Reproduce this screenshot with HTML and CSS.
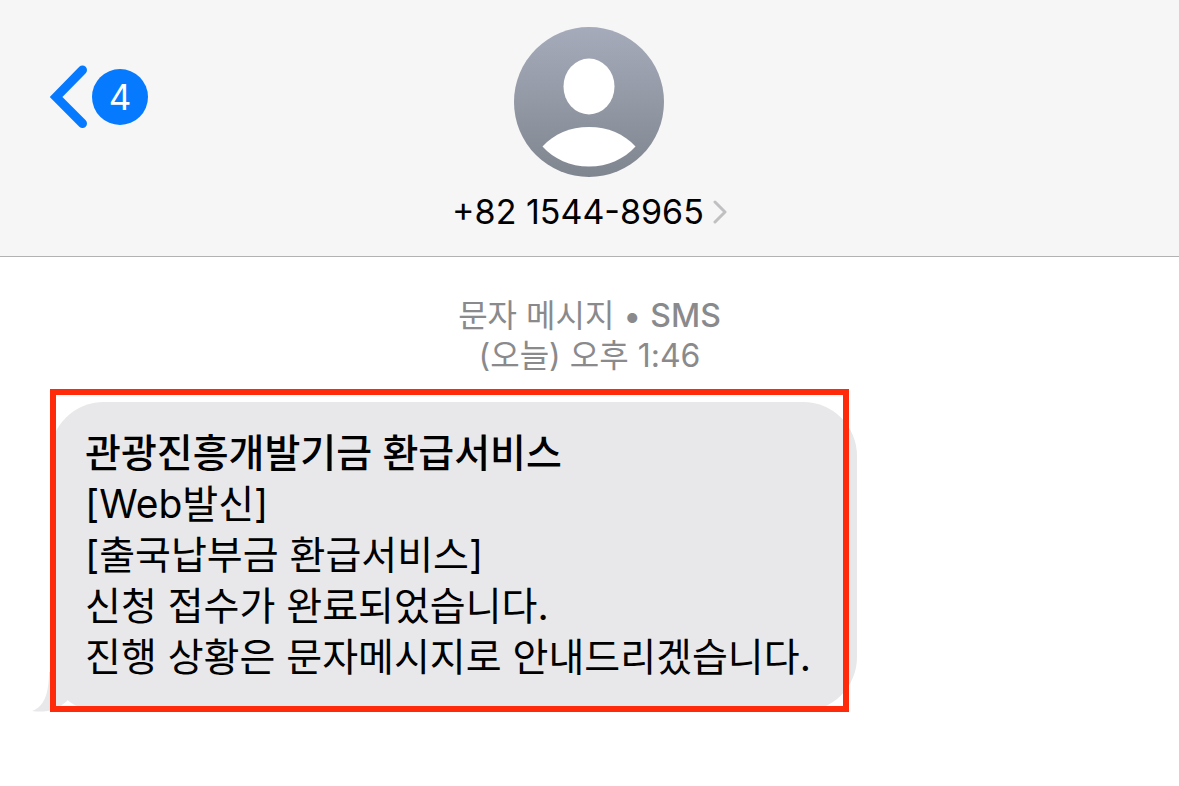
FILE: index.html
```html
<!DOCTYPE html>
<html lang="ko">

<head>
	<title>+82 1544-8965</title>
	<meta charset="UTF-8" />
	<meta name="viewport" content="width=device-width, initial-scale=1" />
	<link rel="stylesheet" href="styles.css">
</head>

<body>

<header class="header">
	<a class="back" href="#" aria-label="뒤로">
		<svg class="back-arrow" viewBox="0 0 38 64" aria-hidden="true">
			<path d="M32.500 5 L6 32 L32.500 58.500" />
		</svg>
		<span class="badge">4</span>
	</a>

	<a class="contact" href="#">
		<svg class="avatar" viewBox="0 0 150 150" aria-hidden="true">
			<defs>
				<linearGradient id="avatarFill" x1="0" y1="0" x2="0" y2="1">
					<stop offset="0" stop-color="#a5abba" />
					<stop offset="1" stop-color="#80868f" />
				</linearGradient>
			</defs>
			<circle cx="75" cy="75" r="75" fill="url(#avatarFill)" />
			<ellipse cx="75" cy="59.500" rx="25.500" ry="28" fill="#fff" />
			<path d="M28.500 119.500 C40 107 56 100 75 100 C94 100 110 107 121.500 119.500 C110 132 94 139.500 75 139.500 C56 139.500 40 132 28.500 119.500 Z" fill="#fff" />
		</svg>
		<span class="number">
			+82 1544-8965
			<svg class="chevron" viewBox="0 0 14 24" aria-hidden="true">
				<path d="M2 2 L12 12 L2 22" />
			</svg>
		</span>
	</a>
</header>

<main class="thread">
	<p class="stamp">
		문자 메시지 • <span class="stamp-kind">SMS</span><br />
		(오늘) 오후 1:46
	</p>

	<div class="message">
		<div class="bubble">
			<strong class="title">관광진흥개발기금 환급서비스</strong><br />
			[Web발신]<br />
			[출국납부금 환급서비스]<br />
			신청 접수가 완료되었습니다.<br />
			진행 상황은 문자메시지로 안내드리겠습니다.
		</div>
		<svg class="tail" viewBox="0 0 40 40" aria-hidden="true">
			<path d="M17 0 C17 22 12 35 0 39 C14 41 25 38 35 29 L40 20 L40 0 Z" />
		</svg>
		<div class="highlight"></div>
	</div>
</main>

</body>

</html>
```

FILE: styles.css
```css
* {
  box-sizing: border-box;
}

body {
  margin: 0;
  background: #fff;
  color: #000;
  font-family: Inter, "Noto Sans CJK KR", sans-serif;
}

a {
  color: inherit;
  text-decoration: none;
}

.header {
  display: grid;
  grid-template-columns: 1fr auto 1fr;
  align-items: start;
  padding: 27px 50px 24px;
  background: #f6f6f6;
  border-bottom: 1px solid #b2b2b2;
}

.back {
  display: flex;
  align-items: center;
  gap: 4px;
  width: fit-content;
  margin-top: 38px;
}

.back-arrow {
  width: 38px;
  height: 64px;
  fill: none;
  stroke: #067aff;
  stroke-width: 9;
  stroke-linecap: round;
  stroke-linejoin: miter;
}

.badge {
  width: 56px;
  height: 56px;
  border-radius: 50%;
  background: #067aff;
  color: #fff;
  font-size: 35px;
  line-height: 56px;
  text-align: center;
}

.contact {
  display: flex;
  flex-direction: column;
  align-items: center;
  gap: 15px;
}

.avatar {
  width: 150px;
  height: 150px;
}

.number {
  display: flex;
  align-items: center;
  gap: 9px;
  font-size: 34px;
  line-height: 40px;
}

.chevron {
  width: 14px;
  height: 24px;
  fill: none;
  stroke: #c0c0c2;
  stroke-width: 3;
  stroke-linecap: round;
  stroke-linejoin: round;
}

.thread {
  padding: 39px 50px;
}

.stamp {
  margin: 0 0 26px;
  color: #8a8a8d;
  font-size: 32px;
  line-height: 40px;
  text-align: center;
}

.stamp-kind {
  font-weight: 500;
}

.message {
  position: relative;
  width: fit-content;
}

.bubble {
  padding: 25px 46px 29px 35px;
  border-radius: 54px 54px 54px 48px;
  background: #e8e8ea;
  font-size: 39px;
  line-height: 51px;
}

.title {
  font-weight: 500;
}

.tail {
  position: absolute;
  left: -18px;
  bottom: -1px;
  width: 40px;
  height: 40px;
  fill: #e8e8ea;
}

/* frame drawn over the bubble, a little off to the left */
.highlight {
  position: absolute;
  inset: -13px 8px -1px 0;
  border: 6px solid #ff2a0a;
}
```
